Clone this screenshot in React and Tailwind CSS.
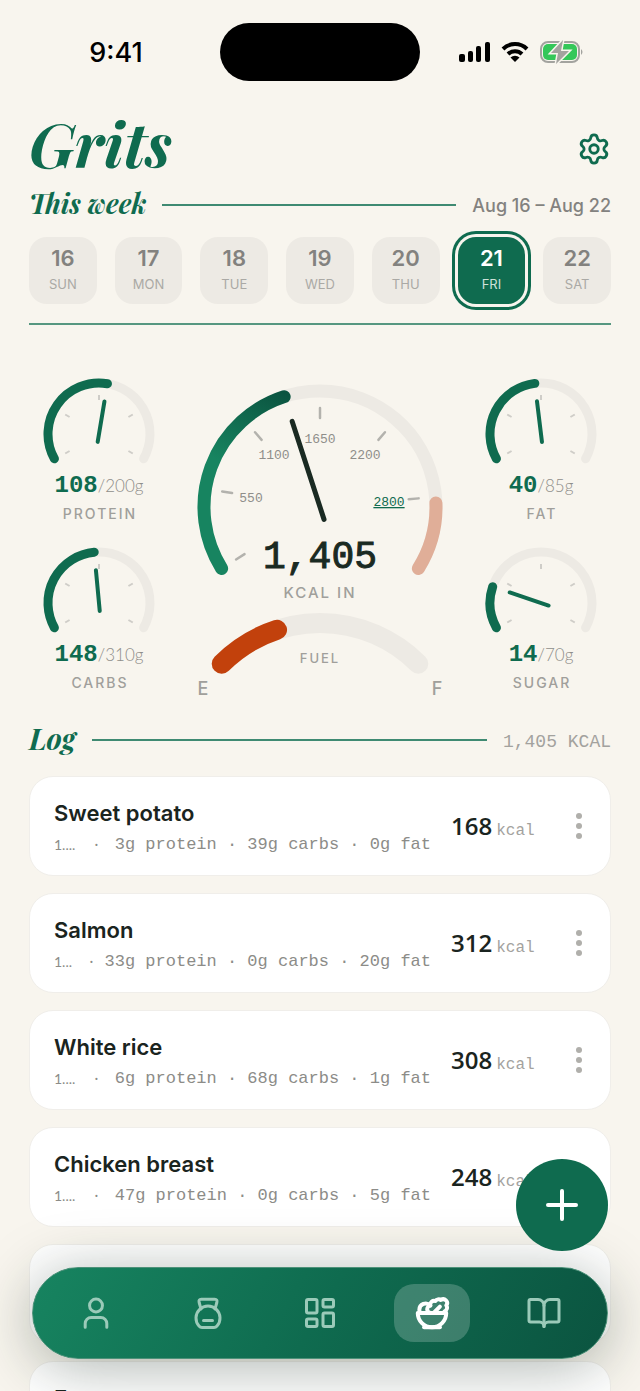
import React from 'react';
import { BookOpen, LayoutDashboard, Plus, Salad, Settings } from 'lucide-react';

const days = [
    { date: 16, name: 'SUN' },
    { date: 17, name: 'MON' },
    { date: 18, name: 'TUE' },
    { date: 19, name: 'WED' },
    { date: 20, name: 'THU' },
    { date: 21, name: 'FRI', active: true },
    { date: 22, name: 'SAT' },
];

const meals = [
    { name: 'Sweet potato', qty: '1....', macros: '3g protein · 39g carbs · 0g fat', kcal: 168 },
    { name: 'Salmon', qty: '1...', macros: '33g protein · 0g carbs · 20g fat', kcal: 312 },
    { name: 'White rice', qty: '1....', macros: '6g protein · 68g carbs · 1g fat', kcal: 308 },
    { name: 'Chicken breast', qty: '1....', macros: '47g protein · 0g carbs · 5g fat', kcal: 248 },
    { name: '' },
    { name: 'E' },
];

// Point on a circle, with 0deg at the top and clockwise angles
const polar = (cx, cy, r, deg) => {
    const a = ((deg - 90) * Math.PI) / 180;
    return [cx + r * Math.cos(a), cy + r * Math.sin(a)];
};

const arc = (cx, cy, r, from, to) => {
    const [x1, y1] = polar(cx, cy, r, from);
    const [x2, y2] = polar(cx, cy, r, to);
    return `M ${x1} ${y1} A ${r} ${r} 0 ${to - from > 180 ? 1 : 0} 1 ${x2} ${y2}`;
};

const Tick = ({ cx, cy, from, to, deg, ...rest }) => {
    const [x1, y1] = polar(cx, cy, from, deg);
    const [x2, y2] = polar(cx, cy, to, deg);
    return <line x1={x1} y1={y1} x2={x2} y2={y2} strokeLinecap="round" {...rest} />;
};

const MacroGauge = ({ label, value, goal }) => {
    const deg = -119 + 238 * (value / goal);

    return (
        <div className="flex flex-col items-center">
            <svg width="114" height="88" viewBox="0 0 114 88" fill="none">
                <path d={arc(57, 57, 51, -119, 119)} stroke="#edeae4" strokeWidth="9" strokeLinecap="round" />
                {[-120, -60, 0, 60, 120].map((t) => (
                    <Tick key={t} cx={57} cy={57} from={34} to={39} deg={t} stroke="#cfcdc8" strokeWidth="2" strokeLinecap="butt" />
                ))}
                <path d={arc(57, 57, 51, -119, deg)} stroke="#0f6b4f" strokeWidth="9" strokeLinecap="round" />
                <Tick cx={57} cy={57} from={-8} to={33} deg={deg} stroke="#0f6b4f" strokeWidth="4" />
            </svg>
            <div className="mt-[5px] h-8 whitespace-nowrap leading-8 text-[#0f6b4f]">
                <span className="font-['Liberation_Mono'] text-2xl font-bold">{value}</span>
                <span className="font-['Lato'] text-[17px] font-light text-[#8f8e8a]">/{goal}g</span>
            </div>
            <div className="pl-[2px] font-['Inter'] text-sm leading-6 font-medium tracking-[2px] text-[#a09f9b]">{label}</div>
        </div>
    );
};

const CalorieGauge = () => (
    <svg className="w-full" viewBox="0 0 260 330" fill="none" role="img" aria-label="1,405 kcal in">
        <defs>
            <linearGradient id="kcal" gradientUnits="userSpaceOnUse" x1="20" y1="180" x2="100" y2="20">
                <stop offset="0" stopColor="#178460" />
                <stop offset="0.5" stopColor="#178460" />
                <stop offset="1" stopColor="#0b5440" />
            </linearGradient>
        </defs>
        <path d={arc(130, 131, 116, -122, 122)} stroke="#edeae4" strokeWidth="13" strokeLinecap="round" />
        <path d={arc(130, 131, 116, 88, 122)} stroke="#e0ae98" strokeWidth="13" strokeLinecap="round" />
        <path d={arc(130, 131, 116, -122, -18)} stroke="url(#kcal)" strokeWidth="13" strokeLinecap="round" />
        {[-122, -81, -41, 0, 41, 85].map((t) => (
            <Tick key={t} cx={130} cy={131} from={89} to={99} deg={t} stroke="#b3b2ad" strokeWidth="2.5" />
        ))}
        <g className="font-['Liberation_Mono'] text-[13px]" fill="#8f8e8a" textAnchor="middle">
            <text x="130" y="67">1650</text>
            <text x="84" y="83">1100</text>
            <text x="175" y="83">2200</text>
            <text x="61" y="126">550</text>
            <text x="199" y="130" fill="#0f6b4f" textDecoration="underline">2800</text>
        </g>
        <Tick cx={130} cy={131} from={-13} to={90} deg={-18} stroke="#1a2a22" strokeWidth="5" />
        <text x="130" y="192" textAnchor="middle" fill="#1a2a22" stroke="#1a2a22" strokeWidth="1" className="font-['Liberation_Mono'] text-[38px]">1,405</text>
        <g className="font-['Inter'] font-medium" fill="#a09f9b" textAnchor="middle">
            <text x="130" y="222" className="text-[15px] tracking-[2px]">KCAL IN</text>
            <text x="130" y="287" className="text-[13px] tracking-[2px]">FUEL</text>
            <text x="13" y="319" className="text-lg">E</text>
            <text x="247" y="319" className="text-lg">F</text>
        </g>
        <path d={arc(130, 386, 139, -45, 45)} stroke="#edeae4" strokeWidth="20" strokeLinecap="round" />
        <path d={arc(130, 386, 139, -45, -18)} stroke="#c2410c" strokeWidth="20" strokeLinecap="round" />
    </svg>
);

const MealCard = ({ meal }) => (
    <li className="flex h-[100px] items-center rounded-3xl border border-[#f0eeea] bg-white pr-[11px] pl-6">
        <div className="w-[397px] shrink-0 pt-[5px]">
            <h3 className="h-8 font-['Inter'] text-[22px] leading-8 font-semibold text-[#1a2420]">{meal.name}</h3>
            <p className="flex h-8 items-center whitespace-pre text-[#8c8c88]">
                {meal.qty && (
                    <>
                        <span className="w-6 shrink-0 font-['Lato'] text-sm">{meal.qty}</span>
                        <span className="flex-1 text-center">·</span>
                        <span className="pr-5 font-['Liberation_Mono'] text-[17px]">{meal.macros}</span>
                    </>
                )}
            </p>
        </div>
        {meal.kcal && (
            <>
                <p className="whitespace-nowrap">
                    <span className="font-['Open_Sans'] text-2xl font-semibold text-[#1a2420]">{meal.kcal}</span>
                    <span className="ml-1 font-['Liberation_Mono'] text-base text-[#a3a29e]">kcal</span>
                </p>
                <button className="ml-auto flex h-10 w-10 flex-col items-center justify-center gap-1" aria-label={`Options for ${meal.name}`}>
                    <span className="h-[6px] w-[6px] rounded-full bg-[#b0afab]" />
                    <span className="h-[6px] w-[6px] rounded-full bg-[#b0afab]" />
                    <span className="h-[6px] w-[6px] rounded-full bg-[#b0afab]" />
                </button>
            </>
        )}
    </li>
);

const Person = (props) => (
    <svg viewBox="0 0 24 24" fill="none" stroke="currentColor" strokeWidth="2" strokeLinecap="round" strokeLinejoin="round" {...props}>
        <circle cx="12" cy="7" r="4.300" />
        <path d="M4.800 21.500v-2.500a4 4 0 0 1 4-4h6.400a4 4 0 0 1 4 4v2.500" />
    </svg>
);

const Kettlebell = (props) => (
    <svg viewBox="0 0 24 24" fill="none" stroke="currentColor" strokeWidth="2" strokeLinecap="round" strokeLinejoin="round" {...props}>
        <path d="M7.300 9.300 6.100 5Q5.600 2.800 7.500 2.800h9q1.900 0 1.400 2.200L16.700 9.300" />
        <path d="M8 21.700q-1.200 0-2-1a8 8 0 1 1 12 0q-.8 1-2 1Z" />
        <path d="M9 17h6" />
    </svg>
);

const tabs = [
    { label: 'Profile', Icon: Person },
    { label: 'Training', Icon: Kettlebell },
    { label: 'Dashboard', Icon: LayoutDashboard },
    { label: 'Food', Icon: Salad, active: true },
    { label: 'Recipes', Icon: BookOpen },
];

const StatusBar = () => (
    <div className="grid h-[104px] grid-cols-[1fr_200px_1fr] items-center text-black">
        <span className="pt-[2px] pl-3 text-center font-['Inter'] text-[27px] font-medium">9:41</span>
        <span className="h-[58px] rounded-full bg-black" />
        <div className="flex items-center gap-[10px] pl-[39px]">
            <svg width="32" height="20" viewBox="0 0 32 20">
                <rect x="0" y="12" width="6" height="8" rx="2" />
                <rect x="9" y="9" width="5" height="11" rx="2" />
                <rect x="17" y="4" width="5" height="16" rx="2" />
                <rect x="26" y="0" width="5" height="20" rx="2" />
            </svg>
            <svg width="28" height="20" viewBox="0 0 28 20" fill="none" stroke="#000" strokeWidth="4">
                <path d="M2 7a17 17 0 0 1 24 0" />
                <path d="M7 12a10 10 0 0 1 14 0" />
                <path d="M9.500 15.500a6.500 6.500 0 0 1 9 0L14 20Z" fill="#000" stroke="none" />
            </svg>
            <svg width="44" height="22" viewBox="0 0 44 22" overflow="visible">
                <rect x="2" y="1" width="38" height="20" rx="7" fill="none" stroke="#a3a39f" strokeWidth="2" />
                <rect x="4" y="3" width="34" height="16" rx="5" fill="#34c759" />
                <path d="M42 8v6q3-3 0-6" fill="#a3a39f" />
                <path d="M24-1 12 12h7l-2 11 13-13h-8Z" fill="#a3a39f" stroke="#f8f5ee" strokeWidth="3" paintOrder="stroke" />
            </svg>
        </div>
    </div>
);

export default function App() {
    return (
        <div className="relative h-screen overflow-hidden bg-[#f8f5ee]">
            <StatusBar />
            <main className="px-[29px]">
                <header className="flex h-[81px] items-center justify-between text-[#0f6b4f]">
                    <h1 className="pb-1 font-['Playfair_Display','Liberation_Serif',serif] text-[62px] leading-none font-bold italic">Grits</h1>
                    <button className="pt-2" aria-label="Settings">
                        <Settings className="h-[34px] w-[34px]" />
                    </button>
                </header>

                <div className="flex h-10 items-center gap-4">
                    <h2 className="pb-1 font-['Playfair_Display','Liberation_Serif',serif] text-[27px] leading-8 font-bold text-[#0f6b4f] italic">This week</h2>
                    <span className="h-[2px] flex-1 bg-[#3f8a72]" />
                    <span className="font-['Inter'] text-[18px] font-medium text-[#83827f]">Aug 16 – Aug 22</span>
                </div>

                <div className="mt-3 grid grid-cols-7 gap-[18px] border-b-2 border-[#569780] pb-[19px]">
                    {days.map((day) => (
                        <button
                            key={day.name}
                            className={`flex h-[67px] flex-col items-center rounded-[18px] pt-[3px] font-['Inter'] ${day.active
                                ? 'bg-[#0f6b4f] text-white ring-3 ring-[#0f6b4f] ring-offset-3 ring-offset-[#f8f5ee]'
                                : 'bg-[#edeae4] text-[#83827f]'
                                }`}
                        >
                            <span className="text-[22px] leading-9 font-semibold">{day.date}</span>
                            <span className={`text-[13px] leading-4 ${day.active ? 'text-[#cfe1da]' : 'text-[#aaa9a5]'}`}>{day.name}</span>
                        </button>
                    ))}
                </div>

                <section className="grid grid-cols-[140px_1fr_140px] pt-[50px]">
                    <div className="flex flex-col gap-5 pt-[2px]">
                        <MacroGauge label="PROTEIN" value={108} goal={200} />
                        <MacroGauge label="CARBS" value={148} goal={310} />
                    </div>
                    <div className="px-[21px] pt-[1px]">
                        <CalorieGauge />
                    </div>
                    <div className="flex flex-col gap-5 pt-[2px]">
                        <MacroGauge label="FAT" value={40} goal={85} />
                        <MacroGauge label="SUGAR" value={14} goal={70} />
                    </div>
                </section>

                <div className="mt-[14px] flex h-10 items-center gap-4">
                    <h2 className="pb-1 font-['Playfair_Display','Liberation_Serif',serif] text-[29px] leading-9 font-bold text-[#0f6b4f] italic">Log</h2>
                    <span className="h-[2px] flex-1 bg-[#3f8a72]" />
                    <span className="pt-1 font-['Liberation_Mono'] text-[18px] text-[#a3a29e]">1,405 KCAL</span>
                </div>

                <ul className="mt-4 flex flex-col gap-[17px]">
                    {meals.map((meal, i) => (
                        <MealCard key={i} meal={meal} />
                    ))}
                </ul>
            </main>

            <button className="absolute right-8 bottom-[140px] z-20 flex h-[92px] w-[92px] items-center justify-center rounded-full bg-[#0f6b4f] text-white" aria-label="Add food">
                <Plus className="h-12 w-12" />
            </button>

            <nav className="absolute inset-x-8 bottom-8 z-10 grid h-[92px] grid-cols-5 items-center rounded-full border border-[#4d9179] bg-[linear-gradient(120deg,#178460,#0f6b4f_50%,#0b5440)] px-[7px] shadow-[0_8px_60px_rgba(20,40,30,0.35)]">
                {tabs.map(({ label, Icon, active }) => (
                    <button
                        key={label}
                        aria-label={label}
                        className={`mx-auto flex h-[58px] w-[76px] items-center justify-center rounded-[20px] ${active ? 'bg-white/20 text-white' : 'text-[#9bcab9]'}`}
                    >
                        <Icon className={active ? 'h-[38px] w-[38px]' : 'h-9 w-9'} strokeWidth={active ? 2.500 : 2} />
                    </button>
                ))}
            </nav>
        </div>
    );
}
